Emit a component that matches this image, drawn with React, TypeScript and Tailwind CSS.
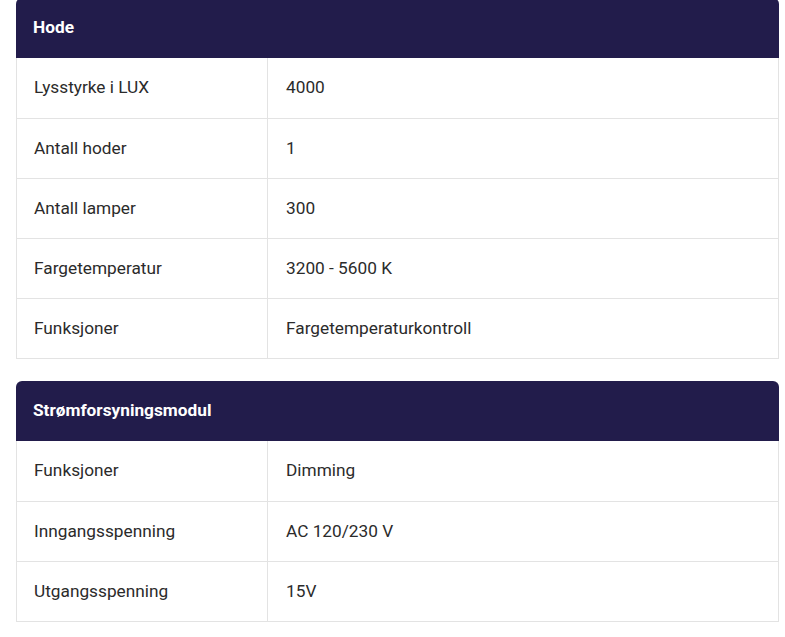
import React from "react";

type Row = [string, string];

const tables: { title: string; rows: Row[] }[] = [
  {
    title: "Hode",
    rows: [
      ["Lysstyrke i LUX", "4000"],
      ["Antall hoder", "1"],
      ["Antall lamper", "300"],
      ["Fargetemperatur", "3200 - 5600 K"],
      ["Funksjoner", "Fargetemperaturkontroll"],
    ],
  },
  {
    title: "Strømforsyningsmodul",
    rows: [
      ["Funksjoner", "Dimming"],
      ["Inngangsspenning", "AC 120/230 V"],
      ["Utgangsspenning", "15V"],
    ],
  },
];

function Table({ title, rows }: { title: string; rows: Row[] }) {
  return (
    <div className="w-full">
      <div className="h-[60px] bg-[#221c4b] rounded-t-[6px] flex items-center pb-[1px] px-[17px] text-white font-bold text-[17.25px]">
        {title}
      </div>
      <div className="border-x border-b border-[#e3e3e3]">
        {rows.map(([k, v], i) => (
          <div
            key={i}
            className={`flex h-[60px] ${i > 0 ? "border-t border-[#e3e3e3]" : ""}`}
          >
            <div className="w-[251px] shrink-0 border-r border-[#e3e3e3] flex items-center pl-[17px] text-[17.25px] text-[#2b2b2b]">
              {k}
            </div>
            <div className="flex-1 flex items-center pl-[18px] text-[17.25px] text-[#2b2b2b]">
              {v}
            </div>
          </div>
        ))}
      </div>
    </div>
  );
}

export default function App() {
  return (
    <div
      className="bg-white w-[785px] h-[637px] overflow-hidden"
      style={{ fontFamily: "Roboto, 'Liberation Sans', sans-serif" }}
    >
      <div className="mt-[-2px] mx-[16px] w-[763px] flex flex-col gap-[22px]">
        {tables.map((t, i) => (
          <Table key={i} title={t.title} rows={t.rows} />
        ))}
      </div>
    </div>
  );
}
